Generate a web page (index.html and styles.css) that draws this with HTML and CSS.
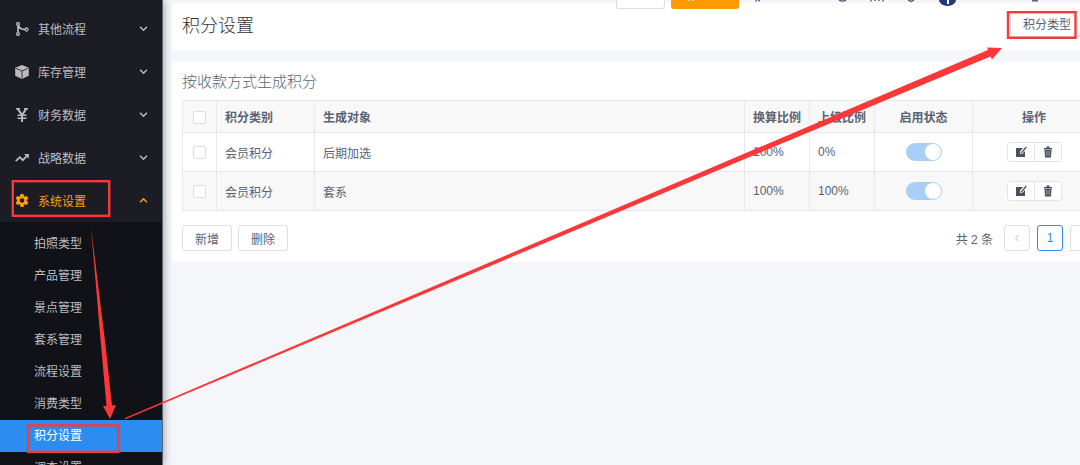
FILE: index.html
```html
<!DOCTYPE html>
<html lang="zh-CN">
<head>
  <meta charset="UTF-8">
  <meta name="viewport" content="width=device-width, initial-scale=1.0">
  <title>积分设置</title>
  <link rel="stylesheet" href="styles.css">
</head>
<body>
  <div class="layout">
    <nav class="sidebar">
      <ul class="menu">
        <li><a class="menu-item" href="#">
          <svg class="menu-icon" viewBox="0 0 14 14" fill="none" stroke="currentColor" stroke-width="1.3"><circle cx="3" cy="2" r="1.4"/><circle cx="3" cy="12" r="1.400"/><circle cx="11.500" cy="7.500" r="1.500"/><path stroke-width="1.700" d="M3 3.500v7M3.500 3.500c1 3 3 4 6.500 4"/></svg>
          <span>其他流程</span>
          <svg class="caret" viewBox="0 0 8 8"><path d="M1 2.5l3 3 3-3"/></svg>
        </a></li>
        <li><a class="menu-item" href="#">
          <svg class="menu-icon" viewBox="0 0 14 14"><path fill="currentColor" d="M7 0l6.8 2.8v8L7 14 .2 10.800v-8z"/><path fill="none" stroke="#1c1c25" stroke-width=".8" d="M.8 3.300L7 6l6.200-2.700M7 6v7.500"/></svg>
          <span>库存管理</span>
          <svg class="caret" viewBox="0 0 8 8"><path d="M1 2.5l3 3 3-3"/></svg>
        </a></li>
        <li><a class="menu-item" href="#">
          <svg class="menu-icon" viewBox="0 0 14 14" fill="none" stroke="currentColor" stroke-width="2"><path d="M2.300.3L7 7 11.700.3M7 7v7"/><path stroke-width="1.500" d="M2.500 7.300h9M2.500 10.200h9M1 .8h4M9 .8h4"/></svg>
          <span>财务数据</span>
          <svg class="caret" viewBox="0 0 8 8"><path d="M1 2.5l3 3 3-3"/></svg>
        </a></li>
        <li><a class="menu-item" href="#">
          <svg class="menu-icon" viewBox="0 0 14 14"><path fill="none" stroke="currentColor" stroke-width="1.8" d="M.8 10.200l4-4 3 3 4.500-4.700"/><path fill="currentColor" d="M9 3h4.800v4.800z"/></svg>
          <span>战略数据</span>
          <svg class="caret" viewBox="0 0 8 8"><path d="M1 2.5l3 3 3-3"/></svg>
        </a></li>
        <li><a class="menu-item open" href="#">
          <svg class="menu-icon" viewBox="2 2 20 20"><path fill="currentColor" d="M19.430 12.980c.04-.32.07-.64.07-.98s-.03-.66-.07-.98l2.110-1.650c.19-.15.24-.42.12-.64l-2-3.460c-.12-.22-.39-.3-.61-.22l-2.490 1c-.52-.4-1.080-.73-1.690-.98l-.38-2.650A.49.49 0 0 0 14 2h-4c-.25 0-.46.18-.49.42l-.38 2.650c-.61.25-1.170.59-1.690.98l-2.490-1c-.23-.09-.49 0-.61.22l-2 3.460c-.13.22-.07.49.12.64l2.110 1.650c-.04.32-.07.65-.07.98s.03.66.07.98l-2.110 1.650c-.19.15-.24.42-.12.64l2 3.460c.12.22.39.3.61.22l2.490-1c.52.4 1.080.73 1.690.98l.38 2.650c.03.24.24.42.49.42h4c.25 0 .46-.18.49-.42l.38-2.650c.61-.25 1.170-.59 1.690-.98l2.490 1c.23.09.49 0 .61-.22l2-3.460c.12-.22.07-.49-.12-.64zM12 15.500a3.500 3.500 0 1 1 0-7 3.500 3.500 0 0 1 0 7z"/></svg>
          <span>系统设置</span>
          <svg class="caret" viewBox="0 0 8 8"><path d="M1 5.500l3-3 3 3"/></svg>
        </a>
          <ul class="submenu">
            <li><a href="#">拍照类型</a></li>
            <li><a href="#">产品管理</a></li>
            <li><a href="#">景点管理</a></li>
            <li><a href="#">套系管理</a></li>
            <li><a href="#">流程设置</a></li>
            <li><a href="#">消费类型</a></li>
            <li><a class="active" href="#">积分设置</a></li>
            <li><a href="#">调查设置</a></li>
          </ul>
        </li>
      </ul>
    </nav>

    <main class="main">
      <div class="toolbar">
        <button class="tool-btn" type="button" aria-label="刷新"></button>
        <button class="tool-btn tool-primary" type="button" aria-label="新建">
          <svg width="8" height="8" viewBox="0 0 8 8" stroke="#ffd699" stroke-width="2"><path d="M2 0v1M6 0v1"/></svg>
        </button>
        <svg class="tool-icons" viewBox="0 0 361 9" fill="none" stroke="#5b6478" stroke-width="1.500">
          <path d="M11 0v1.500M13 .5h2"/>
          <path d="M94 0q3.500 2 7 0M126 0v1.500M130 0v1M134 0v1M138 0v1.500M163 0l3 1.500 3-1.500"/>
          <path fill="#27377f" stroke="none" d="M194 0h17a8.500 6 0 0 1-17 0z"/>
          <path stroke="#fff" stroke-width="2" d="M203 0v4"/>
          <path stroke-width="3" d="M287 0h6"/>
        </svg>
      </div>

      <header class="page-header">
        <h1>积分设置</h1>
        <button class="btn" type="button">积分类型</button>
      </header>

      <section class="card">
        <h2>按收款方式生成积分</h2>
        <table class="grid">
          <colgroup>
            <col class="col-check"><col class="col-type"><col><col class="col-rate"><col class="col-rate"><col class="col-state"><col class="col-action">
          </colgroup>
          <thead>
            <tr>
              <th class="center"><input type="checkbox" aria-label="全选"></th>
              <th>积分类别</th>
              <th>生成对象</th>
              <th>换算比例</th>
              <th>上级比例</th>
              <th class="center">启用状态</th>
              <th class="center">操作</th>
            </tr>
          </thead>
          <tbody>
            <tr>
              <td class="center"><input type="checkbox" aria-label="选择后期加选"></td>
              <td>会员积分</td>
              <td>后期加选</td>
              <td>100%</td>
              <td>0%</td>
              <td class="center"><input class="switch" type="checkbox" aria-label="启用后期加选" checked></td>
              <td class="center">
                <div class="actions">
                  <button type="button" aria-label="编辑"><svg viewBox="0 0 12 12"><path fill="#495060" d="M1 2h7L5 5.500V8h2.200L10 5v6H1z"/><path stroke="#495060" stroke-width="1.300" d="M6 7.300L11.300 1"/></svg></button>
                  <button type="button" aria-label="删除"><svg viewBox="0 0 12 12"><path fill="#495060" d="M2 2h2.500V.5h3V2H10v1.500H2zM2.500 4h7L9 11.500H3z"/><path stroke="#9aabb0" d="M4.800 5v5M7.200 5v5"/></svg></button>
                </div>
              </td>
            </tr>
            <tr>
              <td class="center"><input type="checkbox" aria-label="选择套系"></td>
              <td>会员积分</td>
              <td>套系</td>
              <td>100%</td>
              <td>100%</td>
              <td class="center"><input class="switch" type="checkbox" aria-label="启用套系" checked></td>
              <td class="center">
                <div class="actions">
                  <button type="button" aria-label="编辑"><svg viewBox="0 0 12 12"><path fill="#495060" d="M1 2h7L5 5.500V8h2.200L10 5v6H1z"/><path stroke="#495060" stroke-width="1.300" d="M6 7.300L11.300 1"/></svg></button>
                  <button type="button" aria-label="删除"><svg viewBox="0 0 12 12"><path fill="#495060" d="M2 2h2.500V.5h3V2H10v1.500H2zM2.500 4h7L9 11.500H3z"/><path stroke="#9aabb0" d="M4.800 5v5M7.200 5v5"/></svg></button>
                </div>
              </td>
            </tr>
          </tbody>
        </table>
        <div class="card-footer">
          <button class="btn" type="button">新增</button>
          <button class="btn" type="button">删除</button>
          <div class="pager">
            <span>共 2 条</span>
            <button class="page" type="button" aria-label="上一页" disabled><svg viewBox="0 0 8 8"><path d="M5.500 1l-3 3 3 3"/></svg></button>
            <button class="page current" type="button">1</button>
            <button class="page" type="button" aria-label="下一页"><svg viewBox="0 0 8 8"><path d="M2.500 1l3 3-3 3"/></svg></button>
          </div>
        </div>
      </section>
    </main>
  </div>

  <svg class="marks" width="1080" height="465" viewBox="0 0 1080 465">
    <g fill="none" stroke="#fb3838" stroke-width="2.400">
      <rect x="12.800" y="181.200" width="96.400" height="34.600"/>
      <rect x="28.200" y="425.400" width="90" height="26.500"/>
      <rect x="1008" y="12.200" width="67.500" height="25.600"/>
    </g>
    <g fill="#fb3838">
      <path d="M91 227L105.500 345 112 405.500 116 405 110 419 103 406 106.500 406 101 345z"/>
      <path d="M125 418L740 155.500 988 50 987 47.500 1002 48 992 59.500 990.500 56.500 740 161 125 419.500z"/>
    </g>
  </svg>
</body>
</html>
```

FILE: styles.css
```css
* {
  box-sizing: border-box;
}

body {
  margin: 0;
  height: 100vh;
  overflow: hidden;
  position: relative;
  font-family: "Liberation Sans", "Noto Sans CJK SC", sans-serif;
  font-size: 12px;
  color: #5a6172;
  background: #f5f6f9;
}

ul {
  list-style: none;
  margin: 0;
  padding: 0;
}

a {
  color: inherit;
  text-decoration: none;
}

h1, h2 {
  margin: 0;
  font-weight: 300;
}

button {
  font: inherit;
  color: inherit;
  cursor: pointer;
}

.layout {
  display: flex;
  height: 100%;
}

/* sidebar */
.sidebar {
  flex: 0 0 163px;
  background: #1c1c25;
  color: #bcbcc0;
  border-right: 1px solid #5d656e;
  box-shadow: 1px 0 8px rgba(60, 80, 100, 0.5);
  z-index: 1;
}

.menu {
  padding-top: 7px;
}

.menu-item {
  display: flex;
  align-items: center;
  gap: 9px;
  height: 43px;
  padding: 0 14px 0 15px;
}

.menu-item.open {
  color: #ff9f0a;
}

.menu-icon {
  width: 14px;
  height: 14px;
}

.open .menu-icon {
  width: 14px;
  height: 13px;
}

.caret {
  width: 9px;
  height: 9px;
  margin-left: auto;
  fill: none;
  stroke: currentColor;
  stroke-width: 1.3;
}

.submenu {
  padding-top: 6px;
  background: #111217;
}

.submenu a {
  display: block;
  height: 32px;
  line-height: 32px;
  padding-left: 34px;
}

.submenu .active {
  background: #2d8cf0;
  color: #fff;
}

/* content runs past the right edge of the window */
.main {
  flex: 1;
  min-width: 0;
  margin-right: -26px;
  padding-left: 9px;
  position: relative;
}

.toolbar {
  position: absolute;
  top: 0;
  right: 0;
  display: flex;
  gap: 6px;
  height: 9px;
}

.tool-btn {
  width: 49px;
  padding: 0;
  border: 1px solid #dddee1;
  border-top: 0;
  border-radius: 0 0 3px 3px;
  background: #fff;
  line-height: 0;
}

.tool-primary {
  width: 68px;
  border-color: #ff9900;
  background: #ff9900;
  text-align: left;
  padding-left: 15px;
}

.tool-icons {
  width: 361px;
  height: 9px;
}

.page-header {
  display: flex;
  align-items: center;
  justify-content: space-between;
  height: 47px;
  margin-top: 3px;
  padding: 0 22px 6px 10px;
  background: #fff;
}

.page-header h1 {
  font-size: 18px;
  color: #333;
}

.card {
  margin-top: 12px;
  padding: 8px 10px 11px;
  background: #fff;
}

.card h2 {
  font-size: 15px;
  line-height: 24px;
  margin-bottom: 6px;
}

.btn {
  height: 26px;
  padding: 0 12px;
  border: 1px solid #dddee1;
  border-radius: 3px;
  background: #fff;
}

/* table */
.grid {
  width: 100%;
  table-layout: fixed;
  border-collapse: collapse;
}

.grid th,
.grid td {
  height: 39px;
  padding: 0 8px;
  border: 1px solid #e7e8eb;
  text-align: left;
}

.grid th {
  height: 32px;
  background: #f8f8f9;
}

.grid tbody tr:nth-child(even) {
  background: #f8f8f9;
}

.grid .center {
  padding: 0;
  text-align: center;
}

.col-check { width: 34px; }
.col-type { width: 98px; }
.col-rate { width: 65px; }
.col-state { width: 98px; }
.col-action { width: 123px; }

.grid input {
  appearance: none;
  width: 13px;
  height: 13px;
  margin: 0;
  border: 1px solid #dddee1;
  border-radius: 2px;
  background: #fff;
  vertical-align: middle;
}

.grid .switch {
  width: 36px;
  height: 18px;
  padding: 1px;
  border: 0;
  border-radius: 9px;
  background: #a9cff7;
}

.switch::after {
  content: "";
  display: block;
  width: 16px;
  height: 16px;
  margin-left: auto;
  border-radius: 50%;
  background: #fff;
}

.actions {
  display: inline-flex;
  vertical-align: middle;
  border: 1px solid #e3e4e8;
  border-radius: 3px;
  background: #fff;
}

.actions button {
  width: 26px;
  height: 18px;
  padding: 0;
  border: 0;
  background: none;
}

.actions button + button {
  width: 27px;
  border-left: 1px solid #e3e4e8;
}

.actions svg {
  display: block;
  width: 12px;
  height: 12px;
  margin: auto;
}

.card-footer {
  display: flex;
  align-items: center;
  gap: 6px;
  margin-top: 14px;
}

.pager {
  display: flex;
  align-items: center;
  gap: 7px;
  margin-left: auto;
}

.pager span {
  margin-right: 4px;
}

.page {
  width: 26px;
  height: 26px;
  padding: 0;
  border: 1px solid #dddee1;
  border-radius: 3px;
  background: #fff;
}

.page svg {
  width: 8px;
  height: 8px;
  fill: none;
  stroke: #bbbec4;
}

.page.current {
  border-color: #2d8cf0;
  color: #2d8cf0;
}

/* red boxes and arrows over the page */
.marks {
  position: absolute;
  top: 0;
  left: 0;
  z-index: 2;
  pointer-events: none;
}
```
